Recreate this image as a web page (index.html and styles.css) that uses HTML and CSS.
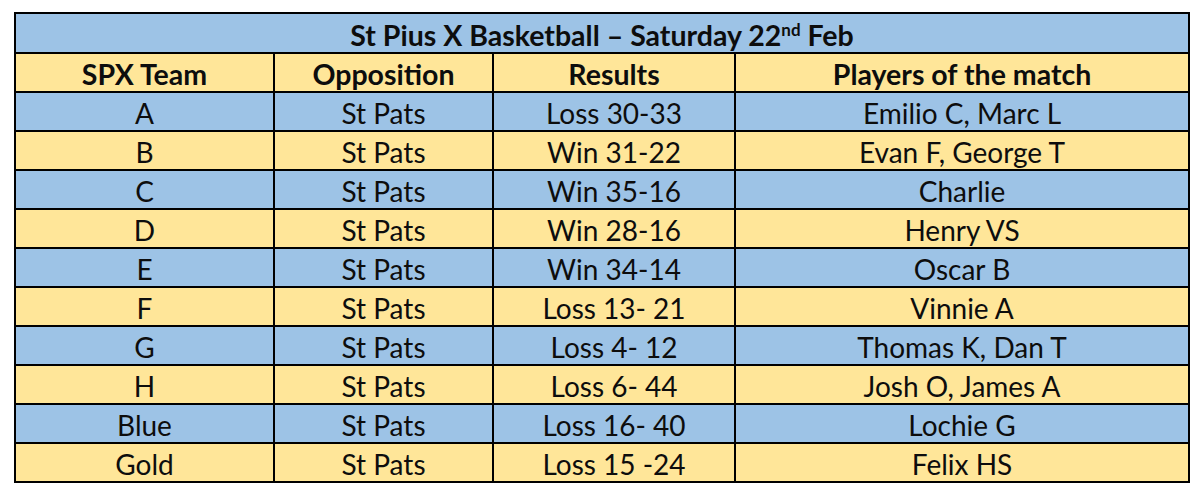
FILE: index.html
```html
<!DOCTYPE html>
<html>
<head>
<meta charset="utf-8">
<link rel="stylesheet" href="styles.css">
</head>
<body>
<table class="results">
  <colgroup>
    <col class="c1"><col class="c2"><col class="c3"><col class="c4">
  </colgroup>
  <tr class="blue title-row"><th colspan="4">St Pius X Basketball – Saturday 22<sup>nd</sup> Feb</th></tr>
  <tr class="gold head-row"><th>SPX Team</th><th>Opposition</th><th>Results</th><th>Players of the match</th></tr>
  <tr class="blue"><td>A</td><td>St Pats</td><td>Loss 30-33</td><td>Emilio C, Marc L</td></tr>
  <tr class="gold"><td>B</td><td>St Pats</td><td>Win 31-22</td><td>Evan F, George T</td></tr>
  <tr class="blue"><td>C</td><td>St Pats</td><td>Win 35-16</td><td>Charlie</td></tr>
  <tr class="gold"><td>D</td><td>St Pats</td><td>Win 28-16</td><td>Henry VS</td></tr>
  <tr class="blue"><td>E</td><td>St Pats</td><td>Win 34-14</td><td>Oscar B</td></tr>
  <tr class="gold"><td>F</td><td>St Pats</td><td>Loss 13- 21</td><td>Vinnie A</td></tr>
  <tr class="blue"><td>G</td><td>St Pats</td><td>Loss 4- 12</td><td>Thomas K, Dan T</td></tr>
  <tr class="gold"><td>H</td><td>St Pats</td><td>Loss 6- 44</td><td>Josh O, James A</td></tr>
  <tr class="blue"><td>Blue</td><td>St Pats</td><td>Loss 16- 40</td><td>Lochie G</td></tr>
  <tr class="gold"><td>Gold</td><td>St Pats</td><td>Loss 15 -24</td><td>Felix HS</td></tr>
</table>
</body>
</html>
```
FILE: styles.css
```css
html, body {
  margin: 0;
  padding: 0;
  background: #ffffff;
}
body {
  padding: 12px 0 0 14px;
  font-family: Lato, "Open Sans", sans-serif;
  color: #0d0d0d;
}
.results {
  border-collapse: collapse;
  width: 1174px;
  table-layout: fixed;
  border: 2px solid #000;
}
.c1 { width: 259px; }
.c2 { width: 219px; }
.c3 { width: 242px; }
.c4 { width: 454px; }
.results th,
.results td {
  border: 2px solid #000;
  text-align: center;
  padding: 4px 0 0 0;
  height: 33px;
  font-size: 28px;
  line-height: 33px;
  font-weight: 400;
  white-space: nowrap;
}
.results th {
  font-weight: 700;
  font-size: 28.5px;
}
.results .title-row th {
  height: 34px;
}
.results sup {
  font-size: 17px;
  line-height: 0;
  vertical-align: 10px;
}
.blue { background: #9dc3e6; }
.gold { background: #ffe699; }
```
